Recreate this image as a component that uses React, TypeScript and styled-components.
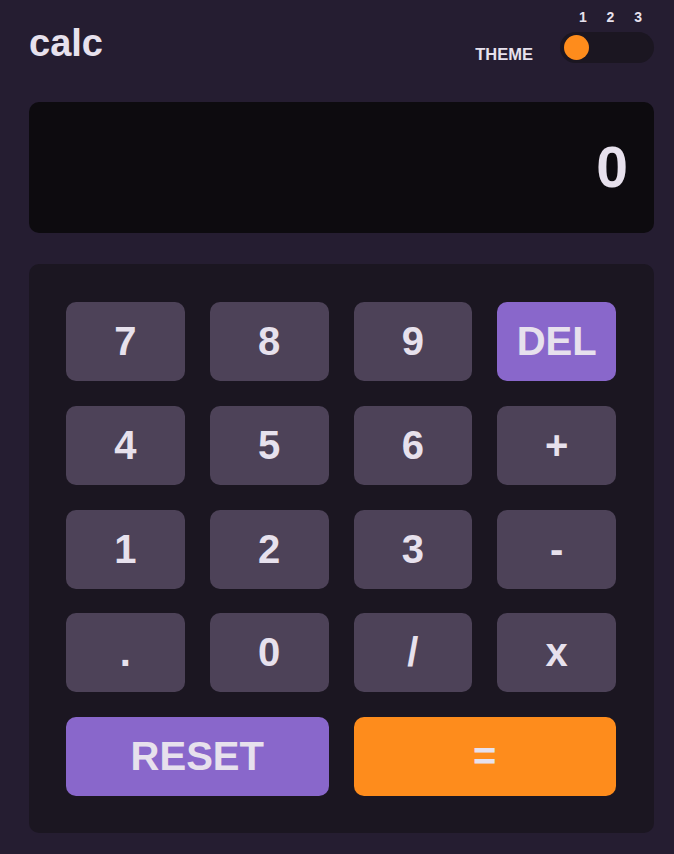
import React, { useState } from "react";
import styled, { createGlobalStyle } from "styled-components";

const GlobalStyle = createGlobalStyle`
  html, body {
    margin: 0;
    padding: 0;
    background-color: #251d31;
  }
  body {
    font-family: "Liberation Sans", Arial, sans-serif;
    color: #e7e1ed;
  }
`;

type KeyKind = "num" | "del" | "reset" | "equals";

interface KeyDef {
  label: string;
  kind: KeyKind;
  wide?: boolean;
}

const keys: KeyDef[] = [
  { label: "7", kind: "num" },
  { label: "8", kind: "num" },
  { label: "9", kind: "num" },
  { label: "DEL", kind: "del" },
  { label: "4", kind: "num" },
  { label: "5", kind: "num" },
  { label: "6", kind: "num" },
  { label: "+", kind: "num" },
  { label: "1", kind: "num" },
  { label: "2", kind: "num" },
  { label: "3", kind: "num" },
  { label: "-", kind: "num" },
  { label: ".", kind: "num" },
  { label: "0", kind: "num" },
  { label: "/", kind: "num" },
  { label: "x", kind: "num" },
  { label: "RESET", kind: "reset", wide: true },
  { label: "=", kind: "equals", wide: true },
];

export default function App() {
  const [value] = useState("0");
  const [theme, setTheme] = useState(1);

  return (
    <Page>
      <GlobalStyle />
      <Header>
        <Title>calc</Title>
        <ThemeBox>
          <ThemeLabel>THEME</ThemeLabel>
          <SwitchColumn>
            <Numbers>
              <span>1</span>
              <span>2</span>
              <span>3</span>
            </Numbers>
            <Track onClick={() => setTheme((t) => (t % 3) + 1)}>
              <Knob $pos={theme} />
            </Track>
          </SwitchColumn>
        </ThemeBox>
      </Header>

      <Display>{value}</Display>

      <Keypad>
        {keys.map((k) => (
          <Key key={k.label} $kind={k.kind} $wide={k.wide}>
            {k.label}
          </Key>
        ))}
      </Keypad>
    </Page>
  );
}

// -------------------------- style --------------------------

const Page = styled.div`
  display: flex;
  flex-direction: column;
  padding: 0 20px 21px 29px;
`;

const Header = styled.header`
  display: flex;
  justify-content: space-between;
  align-items: flex-start;
  height: 102px;
`;

const Title = styled.h1`
  margin: 25px 0 0 0;
  font-size: 38px;
  line-height: 36px;
  font-weight: 700;
  color: #e7e1ed;
`;

const ThemeBox = styled.div`
  display: flex;
  align-items: flex-end;
  gap: 27px;
  margin-top: 9px;
`;

const ThemeLabel = styled.span`
  font-size: 16.5px;
  font-weight: 700;
  line-height: 16px;
  padding-bottom: 1px;
`;

const SwitchColumn = styled.div`
  display: flex;
  flex-direction: column;
`;

const Numbers = styled.div`
  display: flex;
  justify-content: space-between;
  padding: 0 12px 0 19px;
  font-size: 14px;
  font-weight: 700;
  line-height: 16px;
  margin-bottom: 7px;
`;

const Track = styled.div`
  display: flex;
  align-items: center;
  width: 94px;
  height: 31px;
  padding: 0 4px;
  box-sizing: border-box;
  border-radius: 16px;
  background-color: #1b1621;
  cursor: pointer;
`;

const Knob = styled.div<{ $pos: number }>`
  width: 25px;
  height: 25px;
  border-radius: 50%;
  background-color: #fe8c1c;
  margin-left: ${(p) => (p.$pos - 1) * 30.5}px;
`;

const Display = styled.div`
  display: flex;
  align-items: center;
  justify-content: flex-end;
  height: 131px;
  padding-right: 26px;
  border-radius: 10px;
  background-color: #0d0b0f;
  font-size: 57px;
  font-weight: 700;
  line-height: 1;
`;

const Keypad = styled.div`
  display: grid;
  grid-template-columns: repeat(4, 1fr);
  grid-auto-rows: 79px;
  column-gap: 25px;
  row-gap: 24.75px;
  margin-top: 31px;
  padding: 38px 38px 37px 37px;
  border-radius: 10px;
  background-color: #1b1621;
`;

const keyColors: Record<KeyKind, string> = {
  num: "#4d4258",
  del: "#8967cb",
  reset: "#8967cb",
  equals: "#fe8c1c",
};

const Key = styled.button<{ $kind: KeyKind; $wide?: boolean }>`
  display: flex;
  align-items: center;
  justify-content: center;
  grid-column: ${(p) => (p.$wide ? "span 2" : "span 1")};
  border: none;
  border-radius: 10px;
  background-color: ${(p) => keyColors[p.$kind]};
  color: #e7e1ed;
  font-family: "Liberation Sans", Arial, sans-serif;
  font-size: 40px;
  font-weight: 700;
  cursor: pointer;
  padding: 0;
`;
